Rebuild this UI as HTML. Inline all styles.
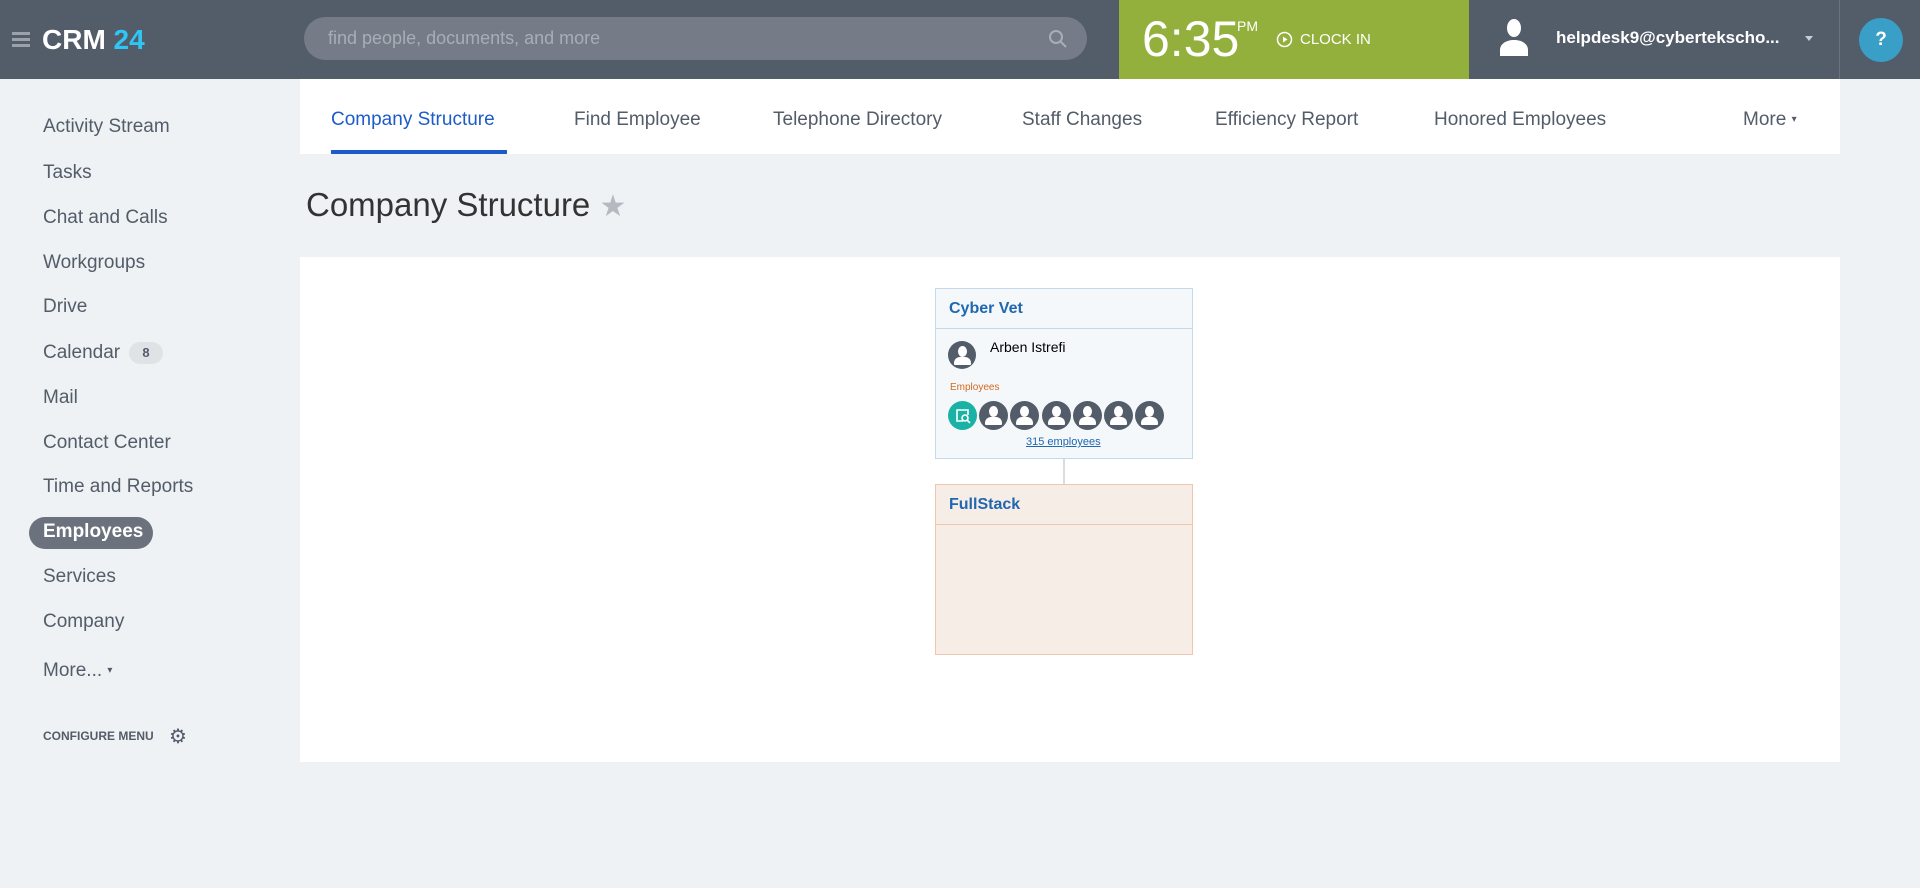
<!DOCTYPE html>
<html><head><meta charset="utf-8"><style>
*{margin:0;padding:0;box-sizing:border-box}
body{width:1920px;height:888px;background:#eef2f4;font-family:"Liberation Sans",sans-serif;position:relative;overflow:hidden}
.a{position:absolute;white-space:nowrap}
.top{position:absolute;left:0;top:0;width:1920px;height:79px;background:#535c69}
.side{color:#535c69;font-size:19px;left:43px}
.tab{top:109px;font-size:19px;color:#535c69}
.av{position:absolute;width:29px;height:29px;border-radius:50%;background:#535c69;overflow:hidden}
.av:before{content:"";position:absolute;left:10px;top:5px;width:9px;height:11px;border-radius:50%;background:#fff}
.av:after{content:"";position:absolute;left:6px;top:16px;width:17px;height:8px;border-radius:6px 6px 1px 1px;background:#fff}
</style></head><body>
<div class="top"></div>
<div class="a" style="left:12px;top:32px;width:18px;height:3px;background:#9aa1aa;box-shadow:0 6px 0 #9aa1aa,0 12px 0 #9aa1aa"></div>
<div class="a" style="left:42px;top:24px;font-size:28px;font-weight:bold;color:#fff">CRM <span style="color:#2fc6f6">24</span></div>
<div class="a" style="left:304px;top:17px;width:783px;height:43px;border-radius:22px;background:#757c87"></div>
<div class="a" style="left:328px;top:28px;font-size:18px;color:#a9aeb6">find people, documents, and more</div>
<svg class="a" style="left:1048px;top:29px" width="20" height="20" viewBox="0 0 20 20"><circle cx="8" cy="8" r="6" fill="none" stroke="#a9aeb6" stroke-width="2"/><path d="M12.5 12.5L18 18" stroke="#a9aeb6" stroke-width="2"/></svg>
<div class="a" style="left:1119px;top:0;width:350px;height:79px;background:#93b03c"></div>
<div class="a" style="left:1142px;top:10px;font-size:50px;color:#fff;font-weight:300">6:35</div>
<div class="a" style="left:1237px;top:18px;font-size:14px;color:#fff">PM</div>
<svg class="a" style="left:1276px;top:31px" width="17" height="17" viewBox="0 0 17 17"><circle cx="8.5" cy="8.5" r="7" fill="none" stroke="#fff" stroke-width="1.5"/><path d="M7 5.5v6l4.5-3z" fill="#fff"/></svg>
<div class="a" style="left:1300px;top:31px;font-size:15px;color:#fff">CLOCK IN</div>
<svg class="a" style="left:1498px;top:18px" width="32" height="38" viewBox="0 0 32 38"><ellipse cx="16" cy="10" rx="7" ry="9" fill="#fff"/><path d="M2 38v-6c0-6 6-10 14-10s14 4 14 10v6z" fill="#fff"/></svg>
<div class="a" style="left:1556px;top:28px;font-size:17px;font-weight:bold;color:#fff">helpdesk9@cybertekscho...</div>
<div class="a" style="left:1805px;top:36px;border:4px solid transparent;border-top:5px solid #c7ccd2"></div>
<div class="a" style="left:1839px;top:0;width:1px;height:79px;background:#6a727d"></div>
<div class="a" style="left:1859px;top:18px;width:44px;height:44px;border-radius:50%;background:#3a9fc6;color:#fff;font-weight:bold;font-size:19px;text-align:center;line-height:44px">?</div>

<div class="a side" style="top:116px">Activity Stream</div>
<div class="a side" style="top:162px">Tasks</div>
<div class="a side" style="top:207px">Chat and Calls</div>
<div class="a side" style="top:252px">Workgroups</div>
<div class="a side" style="top:296px">Drive</div>
<div class="a side" style="top:342px">Calendar</div>
<div class="a" style="left:129px;top:342px;width:34px;height:22px;border-radius:11px;background:#dfe3e6;color:#535c69;font-size:13px;font-weight:bold;text-align:center;line-height:22px">8</div>
<div class="a side" style="top:387px">Mail</div>
<div class="a side" style="top:432px">Contact Center</div>
<div class="a side" style="top:476px">Time and Reports</div>
<div class="a" style="left:29px;top:517px;width:124px;height:32px;border-radius:16px;background:#6b727d"></div>
<div class="a side" style="top:521px;color:#fff;font-weight:bold">Employees</div>
<div class="a side" style="top:566px">Services</div>
<div class="a side" style="top:611px">Company</div>
<div class="a side" style="top:660px">More... <span style="font-size:10px;vertical-align:3px">▾</span></div>
<div class="a" style="left:43px;top:729px;font-size:12px;font-weight:bold;color:#535c69">CONFIGURE MENU</div>
<div class="a" style="left:169px;top:724px;font-size:20px;color:#535c69">⚙</div>

<div class="a" style="left:300px;top:79px;width:1540px;height:75px;background:#fff"></div>
<div class="a tab" style="left:331px;color:#1d5cc8">Company Structure</div>
<div class="a" style="left:331px;top:150px;width:176px;height:4px;background:#1d5cc8"></div>
<div class="a tab" style="left:574px">Find Employee</div>
<div class="a tab" style="left:773px">Telephone Directory</div>
<div class="a tab" style="left:1022px">Staff Changes</div>
<div class="a tab" style="left:1215px">Efficiency Report</div>
<div class="a tab" style="left:1434px">Honored Employees</div>
<div class="a tab" style="left:1743px">More <span style="font-size:10px;vertical-align:3px">▾</span></div>

<div class="a" style="left:306px;top:186px;font-size:33px;color:#333;font-weight:300">Company Structure <span style="color:#b5bac0;font-size:30px">★</span></div>

<div class="a" style="left:300px;top:257px;width:1540px;height:505px;background:#fff"></div>
<div class="a" style="left:935px;top:288px;width:258px;height:171px;background:#f4f8fb;border:1px solid #c6d9e8"></div>
<div class="a" style="left:936px;top:328px;width:256px;height:1px;background:#c6d9e8"></div>
<div class="a" style="left:949px;top:300px;font-size:16px;font-weight:bold;color:#2067b0">Cyber Vet</div>
<div class="av" style="left:948px;top:341px;width:28px;height:28px"></div>
<div class="a" style="left:990px;top:339px;font-size:14px;color:#000">Arben Istrefi</div>
<div class="a" style="left:950px;top:382px;font-size:10px;color:#d5691e">Employees</div>
<div class="a" style="left:948px;top:401px;width:29px;height:29px;border-radius:50%;background:#1ab2a4"></div>
<svg class="a" style="left:955px;top:408px" width="16" height="16" viewBox="0 0 16 16"><path d="M8 13H2V2h11v5" fill="none" stroke="#fff" stroke-width="1.6"/><circle cx="10" cy="10" r="3" fill="none" stroke="#fff" stroke-width="1.6"/><path d="M12 12l3 3" stroke="#fff" stroke-width="1.6"/></svg>
<div class="av" style="left:979px;top:401px"></div>
<div class="av" style="left:1010px;top:401px"></div>
<div class="av" style="left:1042px;top:401px"></div>
<div class="av" style="left:1073px;top:401px"></div>
<div class="av" style="left:1104px;top:401px"></div>
<div class="av" style="left:1135px;top:401px"></div>
<div class="a" style="left:1026px;top:436px;font-size:11px;color:#2067b0;text-decoration:underline">315 employees</div>
<div class="a" style="left:1063px;top:459px;width:2px;height:25px;background:#dcdcdc"></div>
<div class="a" style="left:935px;top:484px;width:258px;height:171px;background:#f7ede7;border:1px solid #efc7ad"></div>
<div class="a" style="left:936px;top:524px;width:256px;height:1px;background:#efc7ad"></div>
<div class="a" style="left:949px;top:496px;font-size:16px;font-weight:bold;color:#2067b0">FullStack</div>
</body></html>
